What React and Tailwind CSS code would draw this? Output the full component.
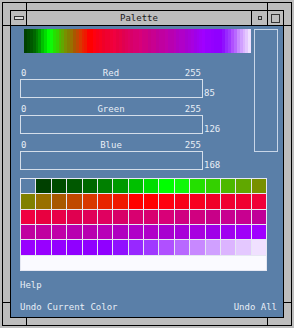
const rows = [
  [null, "#004000", "#004c00", "#005800", "#006800", "#008000", "#009a00", "#00c000", "#00dd00", "#00ff00", "#10f808", "#24e000", "#34d000", "#4cb800", "#60a800", "#789000"],
  ["#808000", "#987000", "#a85800", "#c04800", "#d83800", "#e82400", "#f01800", "#ff0000", "#ff0000", "#ff0010", "#f80018", "#f80020", "#f00028", "#f00030", "#f00030", "#f00038"],
  ["#f00040", "#e80040", "#e80048", "#e00050", "#e00058", "#e00060", "#d80068", "#d80070", "#d80070", "#d80078", "#d00080", "#d00080", "#c80088", "#c80090", "#c80090", "#c00098"],
  ["#c000a0", "#c000a0", "#c000a8", "#b800b0", "#b800b0", "#b800b8", "#b000c0", "#b000c8", "#b000c8", "#a800d0", "#a800d8", "#a800e0", "#a000e8", "#a000f0", "#a000f8", "#a000ff"],
  ["#9800ff", "#9800ff", "#9400ff", "#9000ff", "#9000ff", "#9000ff", "#9010ff", "#9828ff", "#a038ff", "#b050ff", "#b868ff", "#c888ff", "#d0a0ff", "#dcb4ff", "#e4c8ff", "#f0e0ff"],
];

const swatches = rows.flat();
const ramp = swatches.filter(Boolean);

const sliders = [
  { name: "Red", value: 85 },
  { name: "Green", value: 126 },
  { name: "Blue", value: 168 },
];

function Slider({ name, value }) {
  return (
    <div className="flex items-end">
      <div className="w-[183px]">
        <div className="grid grid-cols-[1fr_auto_1fr] h-[11px] leading-[11px] pl-[1px] pr-[2px]">
          <span>0</span>
          <span>{name}</span>
          <span className="text-right">255</span>
        </div>
        <div className="h-[19px] border border-[#d4deea]" />
      </div>
      <span className="ml-[1px] leading-[10px]">{value}</span>
    </div>
  );
}

export default function App() {
  return (
    <div className="w-[294px] h-[328px] bg-[#bdbdbd] p-[2px] font-['DejaVu_Sans_Mono',monospace] text-[9px]">
      <div className="relative w-full h-full border border-black p-[7px]">
        {/* resize corner ticks on the frame */}
        <div className="absolute left-[23px] top-0 w-px h-[7px] bg-black" />
        <div className="absolute left-[264px] top-0 w-px h-[7px] bg-black" />
        <div className="absolute left-[23px] bottom-0 w-px h-[7px] bg-black" />
        <div className="absolute left-[264px] bottom-0 w-px h-[7px] bg-black" />
        <div className="absolute left-0 top-[22px] w-[7px] h-px bg-black" />
        <div className="absolute left-0 top-[299px] w-[7px] h-px bg-black" />
        <div className="absolute right-0 top-[22px] w-[7px] h-px bg-black" />
        <div className="absolute right-0 top-[299px] w-[7px] h-px bg-black" />

        <div className="w-full h-full border border-black flex flex-col">
          <div className="flex h-[15px] border-b border-black text-[#1a1a1a]">
            <div className="w-[16px] border-r border-black flex items-center justify-center">
              <div className="w-[10px] h-[4px] border border-[#333] bg-[#dcdcdc]" />
            </div>
            <div className="flex-1 text-center leading-[14px]">Palette</div>
            <div className="w-[16px] border-l border-black flex items-center justify-center">
              <div className="w-[4px] h-[4px] border border-[#333]" />
            </div>
            <div className="w-[16px] border-l border-black flex items-center justify-center">
              <div className="w-[9px] h-[9px] border border-[#333]" />
            </div>
          </div>

          <div className="flex-1 bg-[#5a7fa8] text-[#e8eef6] pl-[9px] pr-[5px] pt-[3px]">
            <div className="flex items-start">
              <div className="w-[231px]">
                <div className="ml-[4px] h-[24px] flex">
                  {ramp.map((c, i) => (
                    <div key={i} className="flex-1" style={{ backgroundColor: c }} />
                  ))}
                </div>
                <div className="mt-[15px] flex flex-col gap-[6px]">
                  {sliders.map((s) => (
                    <Slider key={s.name} {...s} />
                  ))}
                </div>
              </div>
              <div className="ml-[3px] w-[24px] h-[123px] border border-[#c8d6e8]" />
            </div>

            <div className="mt-[8px] w-[247px] h-[93px] border border-[#e6e8f2] bg-[#e6e8f2] grid grid-cols-16 grid-rows-6 gap-px">
              {swatches.map((c, i) => (
                <div key={i} style={{ backgroundColor: c || "#5a7fa8" }} />
              ))}
              <div className="col-span-16 bg-[#fafaff]" />
            </div>

            <div className="mt-[9px] leading-[10px]">Help</div>
            <div className="mt-[12px] flex justify-between pr-[1px] leading-[10px]">
              <span>Undo Current Color</span>
              <span>Undo All</span>
            </div>
          </div>
        </div>
      </div>
    </div>
  );
}
